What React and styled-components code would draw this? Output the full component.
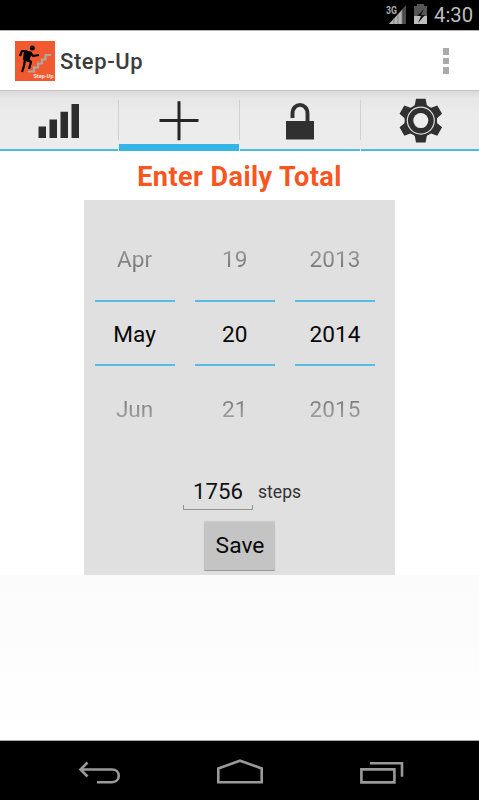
import React from "react";
import styled, { createGlobalStyle } from "styled-components";

const GlobalStyle = createGlobalStyle`
  * { box-sizing: border-box; }
  body { margin: 0; background: #fff; font-family: Roboto, "Liberation Sans", sans-serif; }
  svg { display: block; flex: none; }
`;

const Screen = styled.div`
  width: 479px;
  height: 800px;
  display: flex;
  flex-direction: column;
  overflow: hidden;
`;

const StatusBar = styled.header`
  height: 30px;
  flex: none;
  background: #000;
  display: flex;
  justify-content: flex-end;
  padding-right: 6px;
`;

const Clock = styled.span`
  color: #bebebe;
  font-size: 20.3px;
  line-height: 31px;
  width: 39px;
  margin-left: 5px;
  white-space: nowrap;
`;

const ActionBar = styled.div`
  height: 61px;
  flex: none;
  display: flex;
  align-items: center;
  padding: 0 30px 0 15px;
  background: #fff;
  border-top: 1px solid #b4b4b4;
  border-bottom: 1px solid #c6c6c6;
`;

const AppTitle = styled.h1`
  flex: 1;
  margin: 2px 0 0 5px;
  font-size: 22px;
  line-height: 30px;
  font-weight: 500;
  letter-spacing: 0.6px;
  color: #3c3c3c;
`;

const Overflow = styled.div`
  display: grid;
  gap: 3px;
  margin-top: 1px;
`;

const OverflowDot = styled.i`
  width: 6.5px;
  height: 6.5px;
  background: #aaa;
`;

const Tabs = styled.nav`
  height: 60px;
  flex: none;
  display: grid;
  grid-template-columns: 118px 121px 121px 119px;
  background: linear-gradient(#dadada, #e6e6e6 7px, #ebebeb 22px, #ececec);
`;

const Tab = styled.div`
  display: flex;
  flex-direction: column;
  justify-content: space-between;
  position: relative;
  padding-left: ${(p) => (p.$first ? 0 : 1)}px;
  &::before {
    content: "";
    display: ${(p) => (p.$first ? "none" : "block")};
    position: absolute;
    left: 0;
    top: 9px;
    width: 1px;
    height: 40px;
    background: #d0d0d0;
  }
`;

const TabLine = styled.div`
  flex: none;
  height: ${(p) => (p.$active ? 7.5 : 2)}px;
  background: ${(p) => (p.$active ? "#35b4e6" : "#49bde8")};
`;

const Content = styled.main`
  flex: 1;
  min-height: 0;
  display: flex;
  flex-direction: column;
  align-items: center;
`;

const Heading = styled.h2`
  margin: 0;
  height: 49px;
  padding-top: 9px;
  font-size: 27px;
  line-height: 34px;
  font-weight: 700;
  letter-spacing: 0.45px;
  color: #f8561f;
  white-space: nowrap;
`;

const Panel = styled.section`
  width: 311px;
  height: 375px;
  flex: none;
  background: #e0e0e0;
  display: flex;
  flex-direction: column;
  align-items: center;
`;

const Pickers = styled.div`
  width: 100%;
  height: 271px;
  display: flex;
  gap: 20px;
  padding: 25px 10px 0 10.5px;
`;

const Picker = styled.div`
  width: 80.2px;
  text-align: center;
  font-size: 22.6px;
`;

const Faded = styled.div`
  height: 75px;
  padding-top: ${(p) => (p.$below ? 9 : 0)}px;
  line-height: 70px;
  color: transparent;
  background: ${(p) => (p.$below ? "linear-gradient(#747474 40%, #a8a8a8 76%)" : "linear-gradient(#a4a4a4 25%, #686868 68%)")};
  background-clip: text;
  -webkit-background-clip: text;
`;

const Current = styled.div`
  height: 65.5px;
  line-height: 65px;
  border-top: 2.5px solid #55bce2;
  border-bottom: 2.5px solid #55bce2;
  color: #080808;
`;

const StepsRow = styled.div`
  width: 113px;
  height: 41px;
  display: flex;
`;

const StepsField = styled.div`
  flex: none;
  width: 70px;
  height: 39px;
  display: flex;
  flex-direction: column;
  justify-content: flex-end;
  align-items: center;
  font-size: 22.2px;
  line-height: 28px;
  color: #111;
`;

const FieldEdge = styled.div`
  width: 70px;
  height: 5px;
  border: 1px solid #939393;
  border-top: 0;
`;

const Unit = styled.span`
  margin-left: 5px;
  font-size: 17.6px;
  line-height: 42px;
  color: #333;
`;

const SaveButton = styled.button`
  width: 71px;
  height: 50px;
  margin: 8.5px 0 0;
  padding: 0 0 0 1px;
  border: 0;
  border-bottom: 1px solid #999;
  border-radius: 2px;
  background: #c4c4c4;
  box-shadow: inset 0 1px #cecece, 0 0 1px #aaa;
  font: 400 22.8px/50px Roboto, sans-serif;
  color: #080808;
`;

const Remainder = styled.div`
  width: 100%;
  flex: 1;
  background: linear-gradient(#fbfbfb, #fff);
  border-bottom: 1px solid #aaa;
`;

const NavBar = styled.footer`
  height: 59px;
  flex: none;
  background: #000;
`;

const LogoText = styled.text`
  font: 700 6px Roboto, sans-serif;
  fill: #ffe8df;
`;

const StatusIcons = () => (
  <svg width="43" height="30" viewBox="0 0 43 30">
    <text x="0" y="14" fontFamily="Roboto" fontSize="11.5" fontWeight="700" fill="#aaa" textLength="11" lengthAdjust="spacingAndGlyphs">3G</text>
    <path d="M3 24 20 5v19Z" fill="#4b4b4b" />
    <path d="M3 24 16 10v14Z" fill="#b4b4b4" />
    <path d="M8 18v6M12 14v10M16 10v14" stroke="#777" strokeWidth=".8" />
    <path d="M28 6h3V4h7v2h3v18H28Z" fill="#555" />
    <path d="M28 16h13v8H28Z" fill="#bdbdbd" />
    <path d="M38 9 31 16h4l-3 7 7-8h-4l3-6Z" fill="#111" />
  </svg>
);

const Logo = () => (
  <svg width="40" height="40" viewBox="0 0 40 40">
    <path fill="#f15a31" d="M0 0h40v40H0z" />
    <path d="M13 30.5h6v-4h4v-4h4v-4h3.5v-4.5H36" fill="none" stroke="#b0a7a2" strokeWidth="2.2" />
    <circle cx="17.3" cy="7" r="2.5" />
    <path d="m10 10 6 2-3 8-4-2Z" stroke="#000" strokeWidth="2" strokeLinejoin="round" />
    <path d="m12 10-5 0-2 5M15 11l3 4 6-1M10 18l-1 7-2 6M12 18l4 3-2 7" fill="none" stroke="#000" strokeWidth="2.2" strokeLinejoin="round" />
    <LogoText x="18.5" y="37" textLength="20" lengthAdjust="spacingAndGlyphs">Step-Up</LogoText>
  </svg>
);

const BarsIcon = () => (
  <svg width="118" height="52" viewBox="0 0 118 52">
    <path d="M38.5 36h7.5v11.5h-7.5zM49.5 29h7.5v18.5h-7.5zM60.5 21.2h7.5v26.3h-7.5zM71.5 13.5h7.5v34h-7.5z" transform="translate(0 -.5)" fill="#2d2d2d" />
  </svg>
);

const PlusIcon = () => (
  <svg width="118" height="52" viewBox="0 0 118 52">
    <path d="M60 10.3v39M40.5 29.5h39" stroke="#262626" strokeWidth="3" />
  </svg>
);

const LockIcon = () => (
  <svg width="118" height="52" viewBox="0 0 118 52">
    <path d="M46 30h28v18.5H46z" fill="#303030" />
    <path d="M52.5 27v-4.5c0-11.5 15-11.5 15 0V31" fill="none" stroke="#303030" strokeWidth="3.9" />
  </svg>
);

const GearIcon = () => (
  <svg width="118" height="52" viewBox="0 0 118 52">
    <g transform="translate(59.8 29.6)" fill="#303030">
      {[0, 60, 120, 180, 240, 300].map((a) => (
        <path key={a} transform={`rotate(${a})`} d="M-9-13-6-15.5-4.8-21.8H4.8L6-15.5 9-13 5-8H-5Z" />
      ))}
      <circle r="15.7" />
      <circle r="13.5" fill="none" stroke="#ddd" strokeWidth="1.2" />
      <circle r="7.5" fill="#ededed" />
    </g>
  </svg>
);

const NavIcons = () => (
  <svg width="479" height="59" viewBox="0 741 479 59" fill="none" stroke="#999" strokeWidth="2.6">
    <path d="M87.5 762.5 80.5 769.5 87.5 776.5M81 769.5h31c9 0 9 12.7 0 12.7H97" />
    <path d="M218.3 768.5 240 760.7l21.7 7.8v13.8h-43.4Z" />
    <path d="M361.4 769.4h33v13h-33ZM370 763.3h32v13.5" />
  </svg>
);

const TABS = [BarsIcon, PlusIcon, LockIcon, GearIcon];
const DATES = [["Apr", "May", "Jun"], ["19", "20", "21"], ["2013", "2014", "2015"]];

export default function App() {
  return (
    <>
      <GlobalStyle />
      <Screen>
        <StatusBar><StatusIcons /><Clock>4:30</Clock></StatusBar>
        <ActionBar>
          <Logo />
          <AppTitle>Step-Up</AppTitle>
          <Overflow><OverflowDot /><OverflowDot /><OverflowDot /></Overflow>
        </ActionBar>
        <Tabs>
          {TABS.map((Icon, i) => (
            <Tab key={i} $first={i === 0}>
              <Icon />
              <TabLine $active={i === 1} />
            </Tab>
          ))}
        </Tabs>
        <Content>
          <Heading>Enter Daily Total</Heading>
          <Panel>
            <Pickers>
              {DATES.map(([previous, current, next]) => (
                <Picker key={current}>
                  <Faded>{previous}</Faded>
                  <Current>{current}</Current>
                  <Faded $below>{next}</Faded>
                </Picker>
              ))}
            </Pickers>
            <StepsRow>
              <StepsField>1756<FieldEdge /></StepsField>
              <Unit>steps</Unit>
            </StepsRow>
            <SaveButton>Save</SaveButton>
          </Panel>
          <Remainder />
        </Content>
        <NavBar><NavIcons /></NavBar>
      </Screen>
    </>
  );
}
